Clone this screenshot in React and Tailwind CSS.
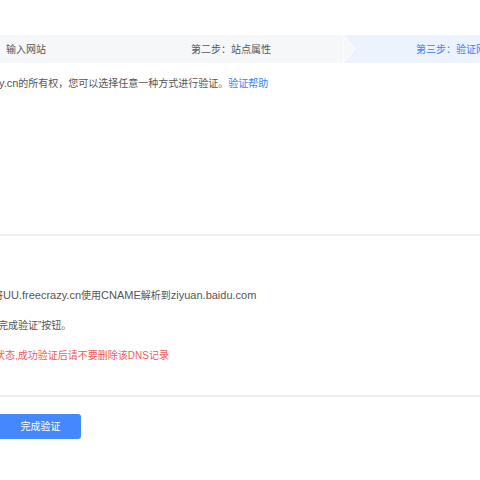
import React from "react";

const steps = [
  { label: "输入网站", left: "pl-[6px]" },
  { label: "第二步：站点属性", left: "pl-[191px]" },
];

const App = () => {
  return (
    <div
      className="w-[480px] h-[480px] overflow-hidden bg-white text-[10px] text-[#555]"
      style={{ fontFamily: '"Liberation Sans", "Noto Sans CJK SC", sans-serif' }}
    >
      {/* steps bar */}
      <div className="mt-[35px] flex h-[28px]">
        <div className="w-[343px] shrink-0 bg-[#f6f7f9] flex items-center">
          <span className="pl-[6px] w-[191px] whitespace-nowrap">{steps[0].label}</span>
          <span className="whitespace-nowrap">{steps[1].label}</span>
        </div>
        <div className="flex-1 min-w-0 overflow-hidden bg-[#edf3fd] flex items-center">
          <svg width="14" height="28" viewBox="0 0 14 28" className="shrink-0">
            <polygon points="0,0 12,14 0,28" fill="#f6f7f9" stroke="#ffffff" strokeWidth="1" />
          </svg>
          <span className="ml-[59px] text-[#3385ff] whitespace-nowrap">第三步：验证网站</span>
        </div>
      </div>

      {/* intro */}
      <div className="mt-[13px] h-[14px] leading-[14px] whitespace-nowrap overflow-hidden">
        <span className="-ml-[1px] text-[11px]">y.cn</span>的所有权，您可以选择任意一种方式进行验证。
        <span className="text-[#3385ff]">验证帮助</span>
      </div>

      <div className="mt-[144px] h-[2px] bg-[#eeeeee]" />

      {/* instructions */}
      <div className="mt-[52px] flex flex-col gap-[16px] leading-[14px] whitespace-nowrap overflow-hidden">
        <div>
          <span className="inline-block -ml-[7px]">将</span>
          <span className="text-[11px]">UU.freecrazy.cn</span>使用
          <span className="text-[11px]">CNAME</span>解析到
          <span className="text-[11px]">ziyuan.baidu.com</span>
        </div>
        <div>
          <span className="inline-block -ml-[2px]">完成验证”按钮。</span>
        </div>
        <div className="text-[#f05a5a]">
          <span className="inline-block -ml-[5px]">状态,成功验证后请不要删除该</span>
          DNS记录
        </div>
      </div>

      <div className="mt-[32px] h-[2px] bg-[#eeeeee]" />

      <div className="mt-[17px]">
        <button className="w-[81px] h-[25px] bg-[#4587fc] text-white rounded-r-[3px] text-[10px]">
          完成验证
        </button>
      </div>
    </div>
  );
};

export default App;
